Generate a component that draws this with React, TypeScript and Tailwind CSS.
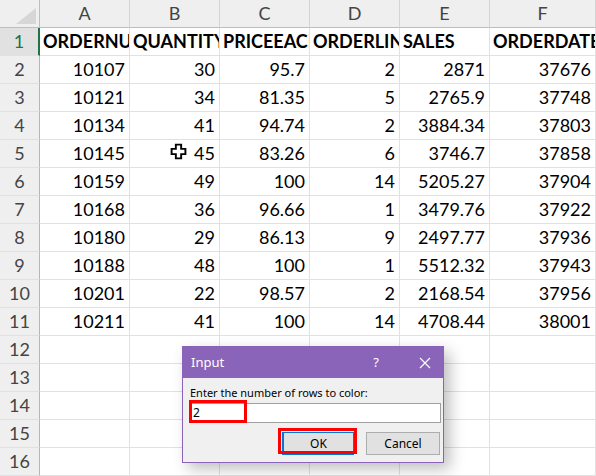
import React from 'react';

const rows: (string | number)[][] = [
  [10107, 30, 95.7, 2, 2871, 37676],
  [10121, 34, 81.35, 5, 2765.9, 37748],
  [10134, 41, 94.74, 2, 3884.34, 37803],
  [10145, 45, 83.26, 6, 3746.7, 37858],
  [10159, 49, 100, 14, 5205.27, 37904],
  [10168, 36, 96.66, 1, 3479.76, 37922],
  [10180, 29, 86.13, 9, 2497.77, 37936],
  [10188, 48, 100, 1, 5512.32, 37943],
  [10201, 22, 98.57, 2, 2168.54, 37956],
  [10211, 41, 100, 14, 4708.44, 38001],
];

const headers = ['ORDERNUMBER', 'QUANTITYORDERED', 'PRICEEACH', 'ORDERLINENUMBER', 'SALES', 'ORDERDATE'];
const letters = ['A', 'B', 'C', 'D', 'E', 'F'];

const gridCols = 'grid grid-cols-[40px_90px_90px_90px_90px_90px_1fr]';

function RowHead({ n, active }: { n: number; active?: boolean }) {
  return (
    <div
      className={`flex items-center justify-center h-[28px] border-b border-[#e1e1e1] text-[18px] ${
        active
          ? 'bg-[#e1e1e1] text-[#217346] border-r-2 border-r-[#217346]'
          : 'bg-[#efefef] text-[#444] border-r border-r-[#b6b6b6]'
      }`}
    >
      {n}
    </div>
  );
}

function Cell({ children, bold }: { children?: React.ReactNode; bold?: boolean }) {
  return (
    <div
      className={`h-[28px] border-r border-b border-[#e1e1e1] flex items-center overflow-hidden whitespace-nowrap text-[18px] text-black ${
        bold ? 'font-bold justify-start pl-[3px]' : 'justify-end pr-[4px]'
      }`}
    >
      {children}
    </div>
  );
}

export default function App() {
  return (
    <div className="relative w-[596px] h-[476px] overflow-hidden bg-white font-['Lato',sans-serif]">
      {/* column headers */}
      <div className={gridCols}>
        <div className="h-[28px] bg-[#efefef] border-r border-b border-[#bdbdbd] flex items-end justify-end p-[3px]">
          <svg width="20" height="16" viewBox="0 0 20 16">
            <polygon points="20,0 20,16 0,16" fill="#d6d6d6" />
          </svg>
        </div>
        {letters.map((l) => (
          <div
            key={l}
            className="h-[28px] bg-[#efefef] border-r border-r-[#d4d4d4] border-b border-b-[#bdbdbd] flex items-center justify-center text-[18px] text-[#444]"
          >
            {l}
          </div>
        ))}
      </div>

      {/* header row */}
      <div className={gridCols}>
        <RowHead n={1} active />
        {headers.map((h) => (
          <Cell key={h} bold>
            {h}
          </Cell>
        ))}
      </div>

      {/* data rows */}
      {rows.map((r, i) => (
        <div key={i} className={gridCols}>
          <RowHead n={i + 2} />
          {r.map((v, j) => (
            <Cell key={j}>{v}</Cell>
          ))}
        </div>
      ))}

      {/* empty rows */}
      {[12, 13, 14, 15, 16].map((n) => (
        <div key={n} className={gridCols}>
          <RowHead n={n} />
          {letters.map((l) => (
            <Cell key={l} />
          ))}
        </div>
      ))}

      {/* mouse cursor */}
      <svg className="absolute left-[170px] top-[143px]" width="17" height="17" viewBox="0 0 16 16">
        <path
          d="M5.5 1.5h5v4h4v5h-4v4h-5v-4h-4v-5h4z"
          fill="white"
          stroke="black"
          strokeWidth="1.8"
          strokeLinejoin="miter"
        />
      </svg>

      {/* input dialog */}
      <div className="absolute left-[182px] top-[346px] w-[262px] h-[117px] border border-[#8a63b8] bg-[#f0f0f0] shadow-[6px_6px_14px_rgba(0,0,0,0.25)] font-['Noto_Sans',sans-serif]">
        <div className="h-[31px] bg-[#8a64b9] flex items-center pl-[8px] text-white text-[13px]">
          <span>Input</span>
          <span className="ml-auto mr-[40px] text-[13px]">?</span>
          <svg className="mr-[12px]" width="12" height="12" viewBox="0 0 12 12">
            <path d="M1 1L11 11M11 1L1 11" stroke="white" strokeWidth="1.2" />
          </svg>
        </div>
        <div className="pl-[7px] pr-[2px] pt-[7px]">
          <div className="text-[11px] text-black leading-[15px]">Enter the number of rows to color:</div>
          <div className="mt-[3px] h-[20px] bg-white border border-[#a0a0a0] flex items-center pl-[2px] text-[12px] text-black">
            2
          </div>
          <div className="flex justify-end gap-[12px] mt-[9px] pr-[1px]">
            <div className="w-[72px] h-[23px] bg-[#e1e1e1] border border-[#0078d7] border-l-2 flex items-center justify-center text-[12px] text-black">
              OK
            </div>
            <div className="w-[74px] h-[23px] bg-[#e1e1e1] border border-[#adadad] flex items-center justify-center text-[12px] text-black">
              Cancel
            </div>
          </div>
        </div>
      </div>

      {/* red highlight boxes */}
      <div className="absolute left-[189px] top-[400px] w-[58px] h-[23px] border-[3px] border-[#ff0000]" />
      <div className="absolute left-[278px] top-[428px] w-[79px] h-[26px] border-[3px] border-[#ff0000]" />
    </div>
  );
}
